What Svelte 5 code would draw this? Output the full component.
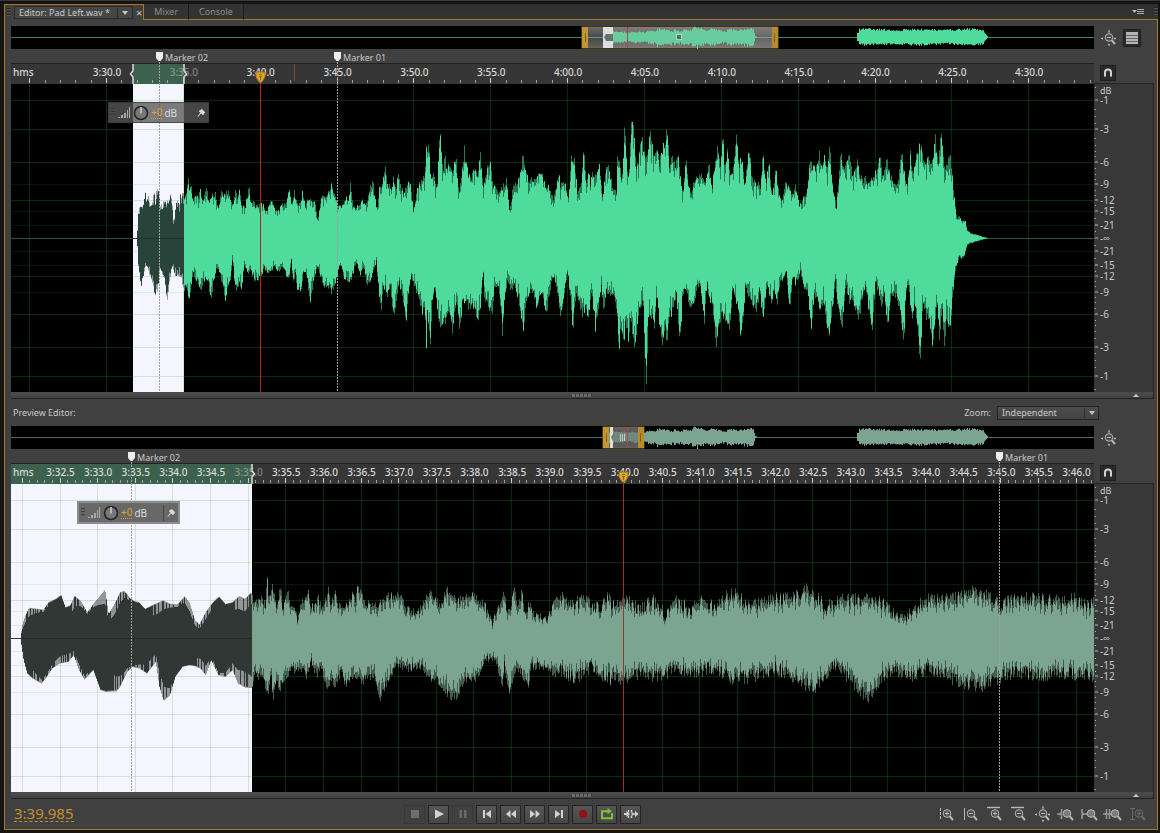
<script>
	// wave shapes, "x,y" knots, traced clip by clip
	const mainUp = [
		[109, '50,443 52,400 55,352 62,355 70,340 75,314 80,340 84,318 90,350 95,345 101,298 105,345 108,310 115,305 120,345 126,352 132,330 137,345 145,335 152,318 156,350 160,400 164,370 170,322 175,350 180,320 185,320 192,318 198,315 203,256 207,310 212,290 218,335 224,310 230,325 240,308 248,335 255,310 260,288 266,345 275,318 285,315 295,360 304,302 310,320 318,310 327,312 338,355 345,292 352,340 357,290 364,355 375,350 386,288 392,345 400,330 405,350 412,345 420,345 430,345 440,370 445,350 455,330 465,360 475,365 482,345 490,350 500,330 506,290 512,345 522,308 530,345 540,345 546,310 555,348 565,330 575,335 585,340 592,396 600,340 608,315 615,318 625,305 635,280 642,318 650,345 660,348 668,350 678,320 684,330 690,290 698,350 706,360 715,345 725,335 735,348 745,318 756,270 762,310 770,360 777,300 785,290 796,240 801,285 806,285 812,315 820,255 826,310 833,242 840,290 850,315 860,290 870,280 879,365 888,310 895,295 905,265 912,260 918,188 925,180 932,270 940,250 950,312 956,150 962,150 967,260 974,200 980,250 986,225 997,240 1007,205 1015,315 1022,270 1032,185 1042,250 1053,270 1062,238 1070,265 1080,204 1088,300 1098,250 1110,225 1120,290 1135,318 1145,295 1158,275 1168,365 1178,295 1190,280 1198,265 1209,190 1216,245 1225,270 1235,265 1245,280 1264,245 1275,300 1285,290 1300,330 1312,265 1318,270'],
		[549, '0,285 15,290 25,335 33,208 42,208 52,315 62,290 70,162 77,290 84,240 90,290 98,248 105,265 118,235 127,335 135,250 141,220 150,265 160,305 168,305 172,185 185,285 194,95 198,215 206,275 214,80 220,98 224,215 232,235 245,132 250,205 262,180 271,128 280,210 290,185 296,220 305,195 312,160 322,135 328,240 336,190 345,240 353,195 360,260 368,320 377,208 384,290 395,310 402,270 415,258 425,260 432,285 440,255 447,232 455,300 465,210 472,180 480,235 487,138 493,230 502,182 510,260 518,240 528,156 535,230 545,215 553,300 566,172 575,270 585,280 600,290 609,185 616,290 626,225 635,320 647,238 656,320 664,330 675,285 690,305 700,315 706,285 718,348 730,325 740,305 748,215 755,240 765,235 777,200 785,245 793,210 800,240 808,180 818,310 828,350 842,192 850,240 858,225 868,205 878,262 892,215 900,270 915,270 925,290 940,260 950,245 960,205 967,280 980,205 990,262 1010,295 1023,190 1030,240 1040,300 1050,200 1058,265 1072,178 1085,175 1090,235 1100,210 1110,228 1118,225 1125,152 1132,225 1143,138 1150,225 1160,235 1168,185 1175,245 1182,330 1190,390 1198,375 1204,397 1214,388 1220,420 1232,430 1245,432 1262,438 1283,443']
	];
	const mainDown = [
		[109, '50,450 55,540 64,580 72,540 80,518 88,550 95,575 102,605 110,602 118,535 125,545 132,560 139,632 146,580 152,540 158,528 165,560 172,545 182,560 190,595 198,580 205,640 212,580 218,550 228,565 240,595 250,568 262,565 272,628 280,570 290,530 298,540 305,580 315,622 322,580 330,570 337,502 342,570 350,600 358,570 363,590 372,525 382,545 392,540 402,565 412,560 422,560 432,525 440,545 452,540 462,525 472,540 485,530 495,545 503,570 509,545 514,500 517,565 525,550 530,595 542,595 550,540 560,560 570,630 580,560 590,530 600,550 612,590 622,580 632,600 642,590 655,528 664,520 672,565 682,565 692,570 702,530 710,515 718,550 730,525 740,580 750,570 760,540 768,508 775,600 782,665 788,590 795,585 802,610 810,585 818,668 828,640 835,570 845,600 857,685 865,600 873,560 882,580 893,610 900,640 908,665 914,630 918,790 921,650 925,710 930,742 935,640 942,580 950,640 957,688 965,700 975,680 985,650 995,720 1002,650 1010,620 1019,722 1025,640 1035,620 1045,650 1055,630 1062,655 1075,685 1085,600 1088,525 1092,620 1104,650 1115,670 1122,580 1133,580 1140,640 1146,715 1153,610 1162,570 1172,600 1180,580 1192,610 1202,660 1210,710 1218,620 1228,600 1238,605 1248,640 1258,620 1268,605 1277,683 1285,610 1300,550 1312,600'],
		[549, '0,670 10,620 22,535 30,620 38,715 45,620 52,610 65,665 75,650 85,665 95,600 105,705 115,640 124,572 130,680 138,600 150,610 160,605 168,640 176,772 182,690 188,770 195,690 204,745 210,690 224,758 235,665 248,615 258,876 264,690 272,665 282,705 290,605 298,700 308,755 315,700 320,745 328,670 340,650 348,600 358,758 366,625 375,590 390,655 402,620 412,580 420,580 432,685 440,570 447,630 455,620 466,755 472,730 480,680 490,670 500,680 508,720 518,580 525,630 532,625 540,750 548,680 556,570 565,620 575,630 588,670 598,590 609,690 615,625 622,575 632,630 642,600 650,635 660,565 670,560 678,540 688,660 697,545 705,575 720,545 732,590 742,590 752,718 762,610 770,620 782,655 790,620 795,675 808,720 818,640 825,565 832,640 846,695 856,580 866,630 878,625 895,685 905,620 915,580 925,650 936,705 945,575 955,600 962,640 972,610 983,698 992,600 1005,610 1020,650 1030,770 1036,600 1044,580 1054,680 1064,625 1079,805 1088,630 1098,670 1108,670 1117,782 1130,610 1138,760 1145,650 1152,748 1160,670 1168,710 1175,640 1182,560 1188,525 1196,500 1204,502 1212,495 1220,465 1230,458 1250,452 1283,443']
	];
	const zoomUp = '57,225 62,190 70,165 80,142 100,145 120,148 135,125 155,115 170,103 182,140 195,135 208,106 225,122 243,155 262,128 280,105 293,88 303,160 320,130 335,95 348,92 362,112 375,122 388,125 405,145 430,132 455,120 475,130 495,132 516,108 530,128 545,180 557,192 575,155 595,125 612,108 630,130 650,125 668,107 685,115 700,98 706,100 712,135 720,115 735,120 742,130 747,45 752,118 762,72 770,120 776,138 785,68 790,140 800,118 805,90 812,135 820,130 832,175 845,125 862,95 870,135 880,140 890,115 900,145 912,122 919,82 925,140 938,90 945,140 960,135 975,125 985,100 992,125 1000,75 1010,98 1025,130 1045,140 1065,130 1085,107 1120,108 1135,145 1160,155 1175,150 1190,120 1206,90 1220,125 1235,130 1250,90 1265,105 1280,120 1300,115 1320,95 1340,125 1355,130 1378,190 1390,150 1400,140 1410,85 1418,165 1430,130 1440,88 1448,150 1462,82 1468,175 1480,125 1490,160 1510,165 1530,170 1545,140 1560,115 1568,110';
	const zoomDown = '57,240 65,300 75,340 90,355 115,370 130,350 145,325 165,310 190,305 205,285 220,330 235,358 260,330 280,390 295,395 325,393 335,380 355,335 370,320 390,325 410,340 435,305 445,380 457,422 475,405 490,350 510,320 530,315 545,318 560,325 575,345 590,300 610,345 630,350 650,330 665,370 685,382 706,383 712,330 720,350 735,345 750,410 758,340 764,430 770,370 785,380 800,350 815,330 840,320 858,345 870,300 885,345 900,320 912,380 925,360 940,375 955,330 965,372 985,345 1005,360 1020,360 1045,340 1062,420 1080,370 1100,330 1120,315 1140,325 1160,320 1180,315 1200,350 1215,355 1230,365 1250,400 1265,412 1280,405 1300,360 1330,362 1350,310 1370,290 1390,310 1405,385 1410,310 1426,395 1440,330 1460,340 1478,385 1485,320 1510,315 1530,320 1550,345 1568,330';
	const zoomUpTail = '566,38 572,35 585,38 600,30 606,42 615,30 625,40 640,28 652,38 665,24 675,38 690,28 700,38 715,32 727,42 735,45 742,38 755,32 770,40 785,40 800,45 806,48 815,43 825,30 840,38 855,38 870,40 885,33 900,18 915,30 930,40 950,38 970,48 985,43 1000,33 1015,40 1030,40 1045,38 1060,36 1075,40 1085,32 1094,36';
	const zoomDownTail = '566,36 575,40 590,30 605,40 620,42 640,36 660,38 680,30 695,36 710,30 730,40 745,40 760,36 775,30 790,38 800,45 815,50 825,36 835,28 850,40 860,55 868,60 880,40 895,33 910,38 930,30 945,38 960,44 980,48 990,43 1000,40 1015,33 1040,38 1060,36 1075,36 1094,38';

	const WIDTH = 1083;
	const parse = (s) => s.split(' ').map((p) => p.split(',').map(Number));

	function noise(i) {
		const v = Math.sin(i * 127.1 + 11.7) * 43758.5453;
		return v - Math.floor(v);
	}

	// one value for each column of the view
	function sample(knots) {
		const out = [];
		let k = 0;
		for (let x = 0; x < WIDTH; x++) {
			while (k < knots.length - 2 && knots[k + 1][0] < x) k++;
			const [x0, y0] = knots[k];
			const [x1, y1] = knots[k + 1];
			if (x < knots[0][0] || x > knots[knots.length - 1][0]) out.push(0);
			else out.push(Math.max(0, y0 + ((y1 - y0) * (x - x0)) / (x1 - x0)));
		}
		return out;
	}

	const joinMain = (parts) => sample(parts.flatMap(([start, s]) => parse(s).map(([x, y]) => [start + x / 3, Math.abs(y - 443) / 3])));
	const joinZoom = (head, tail) => sample([
		...parse(head).map(([x, y]) => [x / 2.8 - 11, Math.abs(y - 233) / 3]),
		...parse(tail).map(([x, y]) => [x - 11, y])
	]);

	function toPath(up, down, mid = 154, start = 0) {
		let d = `M${start} ${mid}`;
		up.forEach((a, i) => (d += `V${(mid - a).toFixed(1)}H${start + i + 1}`));
		d += `V${mid}`;
		for (let i = down.length - 1; i >= 0; i--) d += `V${(mid + down[i]).toFixed(1)}H${start + i}`;
		return d + 'Z';
	}

	const mUp = joinMain(mainUp);
	const mDown = joinMain(mainDown);
	const zUp = joinZoom(zoomUp, zoomUpTail);
	const zDown = joinZoom(zoomDown, zoomDownTail);

	const vary = (list, seed, amount) => list.map((a, i) => a * (1.02 + (noise(i + seed) - 0.5) * amount));
	const roughen = (list, seed, amount) => list.map((a, i) => a * (1 - amount * noise(i + seed) ** 2));
	// right of the selection the samples swing more from column to column
	const jag = (list, seed) => list.map((a, i) => (i < 241 ? a : a + (noise(i + seed) - 0.5) * (i > 548 ? 14 : 9)));
	const mUpFull = vary(mUp, 21, 0.14);
	const mDownFull = vary(mDown, 63, 0.14);
	const zUpFull = jag(zUp, 3);
	const zDownFull = jag(zDown, 77);
	const core = (list, seed) => list.map((a, i) => {
		if (i > 241) return a * (0.98 - 0.28 * noise(i + seed));
		const striped = Math.sin(i / 13 + seed) > -0.6 && noise(i + seed) > 0.35;
		return striped ? a * (0.8 - 0.12 * Math.sin(i / 7)) : a * 0.98;
	});

	const mainWave = {
		peak: toPath(mUpFull, mDownFull),
		body: toPath(roughen(mUpFull, 5, 0.26), roughen(mDownFull, 9, 0.26))
	};
	const zoomWave = {
		peak: toPath(zUpFull, zDownFull),
		body: toPath(core(zUpFull, 1), core(zDownFull, 4))
	};

	// overview: first clip is the main wave squeezed, second one is flatter
	function small(list) {
		return Array.from({ length: 153 }, (_, i) => {
			const at = Math.round(126 + i * 5.45);
			const a = Math.max(...list.slice(at, at + 5));
			return i < 2 || i > 150 ? a * 0.05 : 2 + a * 0.07;
		});
	}
	const second = (seed) => Array.from({ length: 131 }, (_, i) => {
		if (i < 2) return 4;
		if (i > 126) return (131 - i) * 1.1;
		return 6 + noise(i + seed) * 2.4 + Math.sin(i / 8) * 0.5;
	});
	const overviewPath = toPath(small(mUp), small(mDown), 11, 593) + toPath(second(2), second(50), 11, 846);

	function clock(t) {
		const m = Math.floor(t / 60);
		return `${m}:${(t - m * 60).toFixed(1).padStart(4, '0')}`;
	}

	function makeTicks(first, px, step, count, minor) {
		const list = [];
		for (let i = -1; i < count; i++) {
			list.push({ x: first + i * px, label: i < 0 ? '' : clock(210 + step.from + i * step.by), major: true });
			for (let j = 1; j < minor; j++) list.push({ x: first + i * px + (j * px) / minor, label: '', major: false });
		}
		return list.filter((t) => t.x > 0 && t.x < WIDTH);
	}

	// grid lines give way to the playhead and the markers
	function gridTicks(ed) {
		const taken = [ed.head, ...ed.markers.map((m) => m.x)];
		return ed.ticks.filter((t) => t.major && !taken.some((x) => Math.abs(x - t.x) < 3));
	}

	const main = {
		id: 'main',
		ticks: makeTicks(96, 76.85, { from: 0, by: 5 }, 13, 5),
		sel: [122, 173],
		wave: mainWave,
		color: '#4edb9b',
		dark: '#28433a',
		head: 249,
		headColor: '#b82424',
		markers: [{ x: 148, name: 'Marker 02' }, { x: 326, name: 'Marker 01' }],
		hud: 97,
		window: [571, 767],
		white: [592, 602],
		headSmall: 616
	};
	const preview = {
		id: 'preview',
		ticks: makeTicks(49.5, 37.63, { from: 2.5, by: 0.5 }, 28, 5),
		sel: [0, 241],
		wave: zoomWave,
		color: '#7ba591',
		dark: '#303734',
		head: 612,
		headColor: '#963628',
		markers: [{ x: 120, name: 'Marker 02' }, { x: 988, name: 'Marker 01' }],
		hud: 66,
		window: [592, 633],
		white: [599, 602],
		headSmall: 616
	};

	const dbLines = [[138, '1'], [109, '3'], [76, '6'], [54, '9'], [38, '12'], [27, '15'], [13, '21']];
	const dbLabels = [
		...dbLines.map(([o, t]) => ({ y: 154 - o, t: '-' + t })),
		{ y: 154, t: '-∞' },
		...dbLines.map(([o, t]) => ({ y: 154 + o, t: '-' + t }))
	];
	const dbMinor = [151, 129, 122, 115, 100, 93, 87, 82, 70, 64, 59, 48, 43, 33, 20, 7];

	const pct = (x) => (x / WIDTH) * 100 + '%';
	const pctY = (y) => (y / 308) * 100 + '%';

	const transport = [
		{ name: 'Stop', off: true },
		{ name: 'Play' },
		{ name: 'Pause', off: true },
		{ name: 'Previous' },
		{ name: 'Rewind' },
		{ name: 'Fast forward' },
		{ name: 'Next' },
		{ name: 'Record' },
		{ name: 'Loop' },
		{ name: 'Skip selection' }
	];
	const zooms = ['in-amp', 'out-amp', 'in-time', 'out-time', 'full', 'in-point', 'out-point', 'selection', 'track'];
	let zoomMode = 'Independent';
</script>

{#snippet lens(kind)}
	<svg class="lens" width="16" height="16" viewBox="0 0 16 16" fill="none" stroke="#b9b9b9" stroke-width="1">
		{#if kind === 'in-amp' || kind === 'out-amp'}
			<path d="M2.5 2v12" stroke-dasharray={kind === 'in-amp' ? '3 1' : 'none'} />
		{:else if kind === 'in-time' || kind === 'out-time'}
			<path d="M1 1.5h13" stroke-width="1.4" />
		{:else if kind === 'full'}
			<path d="M1 8.500h2M14 8.500h2M9 0v2.400M9 14v2M2.500 7.500v2M15 7.500v2M8 2h2M8 14.500h2" />
		{:else if kind === 'in-point'}
			<path d="M3.500 3v4L2 8l1.500 1v4M-1 8h3" stroke="#999" stroke-width="1.600" />
		{:else if kind === 'out-point'}
			<path d="M0 3v4l1.500 1L0 9v4M1 8h4" stroke="#999" stroke-width="1.600" />
		{:else if kind === 'selection'}
			<path d="M.500 3v4L-1 8l1.500 1v4M3.500 3v4L5 8 3.500 9v4M-3 8h9" stroke="#999" stroke-width="1.400" />
		{:else}
			<path d="M2.5 2v12M0 2.5h5M0 13.5h5" />
		{/if}
		<circle cx="9" cy="7.5" r="3.8" fill={kind.includes('point') || kind === 'selection' ? '#7c7c7c' : '#4a4a4a'} />
		<path d="M11.8 10.4L15 14" stroke-width="2" />
		{#if kind.startsWith('in-') && kind !== 'in-point' || kind === 'track'}
			<path d="M7 7.5h4M9 5.5v4" />
		{:else if kind !== 'selection' && !kind.includes('point')}
			<path d="M7 7.5h4" />
		{/if}
	</svg>
{/snippet}

{#snippet transportIcon(name)}
	<svg width="16" height="14" viewBox="0 0 16 14" fill="#d2d2d2">
		{#if name === 'Stop'}
			<path d="M4 3h8v8H4z" fill="#6e6e6e" />
		{:else if name === 'Play'}
			<path d="M4 2.5L13 7l-9 4.500z" />
		{:else if name === 'Pause'}
			<path d="M4.500 3h2.500v8H4.500zM9 3h2.500v8H9z" fill="#696969" />
		{:else if name === 'Previous'}
			<path d="M4 3h2v8H4zM12 3v8L6.500 7z" />
		{:else if name === 'Rewind'}
			<path d="M7.500 3v8L3 7zM13 3v8L8 7z" />
		{:else if name === 'Fast forward'}
			<path d="M3 3v8l5-4zM8.500 3v8L13 7z" />
		{:else if name === 'Next'}
			<path d="M4 3v8l5.500-4zM10 3h2v8h-2z" />
		{:else if name === 'Record'}
			<circle cx="8" cy="7" r="4" fill="#8e1218" />
		{:else if name === 'Loop'}
			<path d="M6 4.200H3v7h10v-5M5 4.200h5" fill="none" stroke="#84bd3f" stroke-width="2" />
			<path d="M8.500 1l4.500 3.200-4.500 3z" fill="#84bd3f" />
		{:else}
			<path d="M5.500 3v2.500M5.500 8.500V11M8.500 3v2.500M8.500 8.500V11" stroke="#d2d2d2" stroke-width="1.400" />
			<path d="M1 6h2.500V4L7 7l-3.500 3V8H1zM8 7l2-2v1.200h2V4l3.500 3L12 10V7.800h-2V9z" />
		{/if}
	</svg>
{/snippet}

{#snippet overview(ed)}
	<div class="overview">
		<svg viewBox="0 0 1083 23" preserveAspectRatio="none">
			<defs>
				<linearGradient id="range-{ed.id}" x1="0" y1="0" x2="0" y2="1">
					<stop offset="0" stop-color="#6b6b6b" />
					<stop offset=".5" stop-color="#474747" />
					<stop offset="1" stop-color="#626262" />
				</linearGradient>
			</defs>
			<path d="M0 11.500H1083" stroke={ed.id === 'main' ? '#35875f' : '#526d61'} />
			<rect x={ed.window[0]} y="1" width={ed.window[1] - ed.window[0]} height="21" fill="url(#range-{ed.id})" stroke="#8a6823" />
			{#if ed.id === 'main'}
				<path d="M577 11.500H761" stroke="#5d9c80" />
			{/if}
			<path d={overviewPath} fill={ed.color} />
			{#if ed.id === 'main'}
				<rect x="602" y="1" width="159" height="21" fill="#aaa" opacity=".3" />
				<rect x="665.500" y="8.500" width="5" height="5" fill="#52705f" stroke="#a8d8c2" />
			{:else}
				<rect x="602" y="1" width="26" height="21" fill="#555" opacity=".35" />
				<path d="M609.500 8v7M611.500 8v7M613.500 8v7" stroke="#bcc" />
			{/if}
			<rect x={ed.white[0]} y="1" width={ed.white[1] - ed.white[0]} height="21" fill="#dedee2" />
			<path d="M{ed.white[0] + 1} 11l2-3h{ed.white[1] - ed.white[0] - 3}v7h-{ed.white[1] - ed.white[0] - 3}z" fill="#66736d" />
			<path d="M{ed.headSmall + .5} 1v21" stroke="#a34a44" />
			<rect x={ed.window[0]} y="1" width="6" height="21" fill="#c39535" />
			<rect x={ed.window[1] - 6} y="1" width="6" height="21" fill="#b78a2c" />
			<path d="M{ed.window[0] + 3.500} 7v9M{ed.window[1] - 3.500} 7v9" stroke="#80601d" />
		</svg>
	</div>
{/snippet}

{#snippet timeline(ed)}
	<div class="timeline">
		<div class="marker-row"></div>
		<div class="ruler">
			<div class="ruler-sel" style:left={pct(ed.sel[0])} style:width={pct(ed.sel[1] - ed.sel[0])}></div>
			<span class="unit">hms</span>
			{#each ed.ticks as tick}
				<i class:major={tick.major} style:left={pct(tick.x)}></i>
				{#if tick.label}
					<span class="time" class:dim={tick.label === '3:35.0'} style:left={pct(tick.x)}>{tick.label}</span>
				{/if}
			{/each}
			{#if ed.id === 'main'}
				<b class="ghost" style:left={pct(283)}></b>
				<svg class="brace left" style:left={pct(ed.sel[0])} width="5" height="20" viewBox="0 0 5 20"><path d="M4 0v7L1.500 10 4 13v7" fill="none" stroke="#ddd" stroke-width="1.500" /></svg>
			{/if}
			<svg class="brace" style:left={pct(ed.sel[1])} width="5" height="20" viewBox="0 0 5 20"><path d="M1 0v7l2.500 3L1 13v7" fill="none" stroke="#ddd" stroke-width="1.500" /></svg>
		</div>
		<div class="wave">
			<svg viewBox="0 0 1083 308" preserveAspectRatio="none">
				<defs>
					<clipPath id="in-{ed.id}"><rect x={ed.sel[0]} y="0" width={ed.sel[1] - ed.sel[0]} height="308" /></clipPath>
					<clipPath id="out-{ed.id}"><rect x={ed.sel[1]} y="0" width={WIDTH - ed.sel[1]} height="308" /></clipPath>
				</defs>
				<rect x={ed.sel[0]} y="0" width={ed.sel[1] - ed.sel[0]} height="308" fill="#f5f5ff" />
				<g class="grid">
					{#each gridTicks(ed) as tick}
						<path d="M{Math.round(tick.x) - .5} 0V308" />
					{/each}
					{#each dbLines as [o]}
						<path d="M0 {154.500 - o}H1083M0 {154.500 + o}H1083" opacity={o < 60 && o !== 38 ? 0.6 : 1} />
					{/each}
				</g>
				<rect x={ed.sel[0]} y="0" width={ed.sel[1] - ed.sel[0]} height="308" fill="#f5f5ff" opacity=".4" />
				<path d="M0 154.500H1083" stroke={ed.id === 'main' ? '#2b5542' : '#5d4a4a'} />
				<g clip-path="url(#in-{ed.id})" fill={ed.dark}>
					<path d={ed.wave.peak} opacity=".5" />
					<path d={ed.wave.body} />
				</g>
				<g clip-path="url(#out-{ed.id})" fill={ed.color}>
					<path d={ed.wave.peak} opacity=".55" />
					<path d={ed.wave.body} />
				</g>
				<path d="M{ed.sel[0]} 154.500H{ed.sel[1]}" stroke="#1d2522" opacity=".6" />
			</svg>
			<div class="hud {ed.id}" style:left={pct(ed.hud)}>
				<span class="grip"></span>
				<svg width="14" height="12" viewBox="0 0 14 12" fill="#aaa"><path d="M1 10h2v1H1zM4 8h2v3H4zM7 6h2v5H7zM10 3h1v8h-1zM12 0h1v11h-1z" /></svg>
				<svg width="16" height="16" viewBox="0 0 16 16">
					<circle cx="8" cy="8" r="6.500" fill="#777" stroke="#242424" stroke-width="1.600" />
					<path d="M8 2v6.500" stroke="#ddd" stroke-width="1.300" />
				</svg>
				<button class="gain">+0</button>
				<span class="db">dB</span>
				<button class="pin" aria-label="Pin">
					<svg width="9" height="9" viewBox="0 0 9 9"><path d="M4.500 1L8 4.500 7 5 6 7 4 5 1 8.500 3.600 4.600 2 3l2-.800z" fill="#ddd" stroke="#ddd" stroke-width=".600" /></svg>
				</button>
			</div>
		</div>
		{#each ed.markers as marker}
			<div class="marker" style:left={pct(marker.x)}>
				<svg width="9" height="10" viewBox="0 0 9 10"><path d="M1 0h7v6L5.500 9h-2L1 6z" fill="#eee" /></svg>
				<span>{marker.name}</span>
			</div>
		{/each}
		<div class="playhead" style:left={pct(ed.head)} style:--line={ed.headColor}>
			<svg width="11" height="12" viewBox="0 0 11 12">
				<path d="M1 1h9v5L7 11H4L1 6z" fill="#e0a524" stroke="#9c701a" />
				<path d="M4 3.500h3M4 5.500h3M5.500 5v4" stroke="#8c6212" />
			</svg>
		</div>
	</div>
{/snippet}

{#snippet rail()}
	<div class="rail">
		<button class="snap" aria-label="Toggle snapping">
			<svg width="10" height="10" viewBox="0 0 10 10" fill="none" stroke-width="2"><path d="M2 9V4.500a3 3 0 0 1 6 0V9" stroke="#d4d4d4" /><path d="M1 8.500h2M7 8.500h2" stroke="#8a8a8a" stroke-width="1" /></svg>
		</button>
		<div class="scale">
			<span class="head">dB</span>
			{#each dbLabels as label}
				<span class="mark" style:top={pctY(label.y)}>{label.t}</span>
			{/each}
			{#each dbMinor as o}
				<i style:top={pctY(154 - o)}></i>
				<i style:top={pctY(154 + o)}></i>
			{/each}
		</div>
	</div>
{/snippet}

{#snippet scrollbar()}
	<div class="scrollbar">
		<span class="ridge"></span>
		<span class="up"></span>
	</div>
{/snippet}

<div class="app">
	<div class="tabs">
		<div class="tab active">
			<span class="grip"></span>
			<button class="file">Editor: Pad Left.wav * <span class="split"></span><span class="down"></span></button>
			<button class="close" aria-label="Close">×</button>
		</div>
		<button class="tab">Mixer</button>
		<button class="tab">Console</button>
		<div class="rest">
			<button class="menu" aria-label="Panel menu">
				<svg width="13" height="8" viewBox="0 0 13 8"><path d="M0 2h5L2.500 5z" fill="#bbb" /><path d="M5 1.500h7M5 3.500h7M5 5.500h7" stroke="#aaa" /></svg>
			</button>
			<span class="grip"></span>
		</div>
	</div>

	<div class="panel">
		<div class="row top">
			{@render overview(main)}
			<div class="tools">
				<button class="icon" aria-label="Zoom out full">{@render lens('full')}</button>
				<button class="list" aria-label="Show layers">
					<svg width="12" height="12" viewBox="0 0 12 12"><path d="M0 0h12v12H0z" fill="#b5b5b5" /><path d="M0 3.500h12M0 6.500h12M0 9.500h12" stroke="#666" /></svg>
				</button>
			</div>
		</div>
		<div class="row grow">
			{@render timeline(main)}
			{@render rail()}
		</div>
		{@render scrollbar()}

		<div class="caption">
			<span>Preview Editor:</span>
			<label for="zoom">Zoom:</label>
			<div class="pick">
				<select id="zoom" bind:value={zoomMode}>
					<option>Independent</option>
					<option>Linked</option>
				</select>
				<span class="down"></span>
			</div>
		</div>

		<div class="row">
			{@render overview(preview)}
			<div class="tools">
				<button class="icon" aria-label="Zoom out full">{@render lens('full')}</button>
			</div>
		</div>
		<div class="row grow">
			{@render timeline(preview)}
			{@render rail()}
		</div>
		{@render scrollbar()}

		<div class="footer">
			<div><button class="now">3:39.985</button></div>
			<div class="transport">
				{#each transport as item}
					<button aria-label={item.name} disabled={item.off}>{@render transportIcon(item.name)}</button>
				{/each}
			</div>
			<div class="zooms">
				{#each zooms as kind}
					<button class="icon" aria-label="Zoom {kind}" disabled={kind === 'track'}>{@render lens(kind)}</button>
				{/each}
			</div>
		</div>
	</div>
</div>

<style>
	:global(body) {
		margin: 0;
		background: #161412;
	}

	.app {
		min-height: 100vh;
		box-sizing: border-box;
		padding: 3px 2px 3px 4px;
		display: flex;
		flex-direction: column;
		background: #161412;
		border-top: 1px solid #383838;
		color: #cacaca;
		font: 9px/12px "Noto Sans", "Open Sans", sans-serif;
	}

	button {
		font: inherit;
		color: inherit;
		background: none;
		border: 0;
		padding: 0;
		margin: 0;
		display: flex;
		align-items: center;
		justify-content: center;
	}

	svg {
		display: block;
		flex: none;
	}

	/* tabs */
	.tabs {
		display: flex;
		height: 16px;
		background: #303030;
	}

	.tab {
		border-right: 1px solid #1d1d1d;
		border-bottom: 1px solid #a27a2b;
		padding: 0 10px;
		color: #8b8b8b;
		background: #333;
	}

	.tab.active {
		display: flex;
		align-items: center;
		gap: 3px;
		padding: 0 1px 0 2px;
		background: #404040;
		border: 1px solid #a27a2b;
		border-bottom: 0;
		color: #cacaca;
	}

	.grip {
		width: 4px;
		height: 9px;
		background: repeating-linear-gradient(#262626 0 1px, #555 1px 2px, transparent 2px 3px);
	}

	.file {
		height: 13px;
		padding: 0 4px;
		border: 1px solid #2a2a2a;
		background: #464646;
	}

	.split {
		width: 1px;
		height: 10px;
		margin: 0 4px 0 7px;
		background: #2b2b2b;
	}

	.down {
		border: 3px solid transparent;
		border-top: 4px solid #c6c6c6;
		border-bottom: 0;
	}

	.close {
		font-size: 11px;
	}

	.rest {
		flex: 1;
		display: flex;
		justify-content: flex-end;
		align-items: center;
		gap: 9px;
		border-bottom: 1px solid #a27a2b;
		background: linear-gradient(#2e2e2e, #353535);
	}

	/* panel */
	.panel {
		flex: 1;
		display: flex;
		flex-direction: column;
		background: #404040;
		border: 1px solid #a27a2b;
		border-top: 0;
		padding: 6px 3px 0 6px;
	}

	.row {
		display: grid;
		grid-template-columns: 1fr 60px;
	}

	.grow {
		flex: 1;
		min-height: 200px;
	}

	.overview {
		background: #000;
		height: 23px;
	}

	.overview svg {
		width: 100%;
		height: 100%;
	}

	.tools {
		display: flex;
		align-items: center;
		gap: 7px;
		padding-left: 6px;
	}

	.list {
		width: 18px;
		height: 18px;
		border: 1px solid #1f1f1f;
		background: #2b2b2b;
		box-sizing: border-box;
	}

	/* timeline */
	.timeline {
		position: relative;
		display: flex;
		flex-direction: column;
	}

	.marker-row {
		height: 14px;
	}

	.ruler {
		position: relative;
		height: 21px;
		box-sizing: border-box;
		background: #363636;
		border-top: 1px solid #222;
		font-size: 10px;
		font-weight: 500;
		color: #dadada;
		overflow: hidden;
	}

	.ruler-sel {
		position: absolute;
		top: 0;
		bottom: 0;
		background: #3c614e;
	}

	.unit {
		position: absolute;
		left: 2px;
		top: 2px;
	}

	.time {
		position: absolute;
		top: 2px;
		transform: translateX(-50%);
	}

	.time.dim {
		opacity: .45;
	}

	.ruler i {
		position: absolute;
		bottom: 1px;
		width: 1px;
		height: 3px;
		margin-left: -1px;
		background: #a2a2a2;
	}

	.ruler i.major {
		height: 5px;
		background: #ccc;
	}

	.ghost {
		position: absolute;
		top: 0;
		bottom: 3px;
		width: 1px;
		background: #6d5229;
	}

	.brace {
		position: absolute;
		top: 0;
		margin-left: -1px;
	}

	.brace.left {
		margin-left: -4px;
	}

	.wave {
		position: relative;
		flex: 1;
		background: #000;
	}

	.wave > svg {
		position: absolute;
		width: 100%;
		height: 100%;
	}

	.grid path {
		stroke: rgba(20, 150, 30, .3);
	}

	.marker {
		position: absolute;
		top: 3px;
		bottom: 0;
		display: flex;
		align-items: flex-start;
		gap: 1px;
		margin-left: -4px;
	}

	.marker span {
		white-space: nowrap;
	}

	.marker::after {
		content: "";
		position: absolute;
		left: 4px;
		top: 10px;
		bottom: 0;
		width: 1px;
		background: repeating-linear-gradient(#a0a0a0 0 2px, transparent 2px 3px);
	}

	.playhead {
		position: absolute;
		top: 22px;
		bottom: 0;
		width: 11px;
		margin-left: -5px;
	}

	.playhead::after {
		content: "";
		position: absolute;
		left: 5px;
		top: 12px;
		bottom: 0;
		width: 1px;
		background: var(--line);
	}

	/* floating gain control */
	.hud {
		position: absolute;
		z-index: 1;
		top: 18px;
		height: 21px;
		box-sizing: border-box;
		display: flex;
		align-items: center;
		gap: 2px;
		padding: 0 2px;
		background: rgba(88, 88, 88, .78);
		border: 1px solid rgba(60, 60, 60, .8);
		font-size: 10px;
	}

	.hud.preview {
		top: 17px;
		height: 23px;
		background: #686868;
		border: 2px solid #8d8d8d;
	}

	.hud .grip {
		opacity: .6;
	}

	.gain {
		color: #e0a22f;
		line-height: 11px;
		border-bottom: 1px dotted #d09a35;
	}

	.db {
		color: #ddd;
	}

	.pin {
		margin-left: 14px;
		padding-left: 3px;
		height: 16px;
		border-left: 1px solid #444;
	}

	/* amplitude scale */
	.rail {
		display: flex;
		flex-direction: column;
		align-items: flex-start;
	}

	.snap {
		width: 16px;
		height: 16px;
		box-sizing: border-box;
		margin: 16px 0 2px 6px;
		border: 1px solid #1e1e1e;
		background: #2a2a2a;
	}

	.scale {
		position: relative;
		flex: 1;
		align-self: stretch;
		background: #383838;
		border-top: 1px solid #242424;
		border-right: 1px solid #242424;
		line-height: 9px;
	}

	.scale .head {
		position: absolute;
		left: 6px;
		top: 2px;
	}

	.mark {
		position: absolute;
		left: 6px;
		transform: translateY(-50%);
		font-size: 10px;
	}

	.mark::before {
		content: "";
		position: absolute;
		left: -5px;
		top: 4px;
		width: 3px;
		height: 1px;
		background: #bbb;
	}

	.scale i {
		position: absolute;
		left: 1px;
		width: 1px;
		height: 1px;
		background: #bbb;
	}

	.scrollbar {
		height: 7px;
		box-sizing: border-box;
		display: grid;
		grid-template-columns: 1fr auto 1fr;
		align-items: center;
		background: linear-gradient(#4f4f4f, #404040);
		border-bottom: 1px solid #242424;
		border-right: 1px solid #242424;
	}

	.ridge {
		grid-column: 2;
		width: 20px;
		height: 3px;
		background: repeating-linear-gradient(90deg, #6c6c6c 0 3px, #3a3a3a 3px 4px);
	}

	.up {
		justify-self: end;
		margin-right: 14px;
		border: 3px solid transparent;
		border-bottom: 3px solid #ccc;
		border-top: 0;
	}

	.caption {
		display: flex;
		align-items: center;
		height: 27px;
		padding: 0 55px 0 2px;
	}

	.caption span:first-child {
		flex: 1;
	}

	.pick {
		position: relative;
		margin-left: 6px;
	}

	.pick select {
		display: block;
		appearance: none;
		width: 102px;
		height: 14px;
		padding: 0 4px;
		border: 1px solid #252525;
		border-radius: 0;
		background: linear-gradient(#4d4d4d, #434343);
		color: #cacaca;
		font: inherit;
	}

	.pick .down {
		position: absolute;
		right: 4px;
		top: 5px;
		pointer-events: none;
	}

	.pick::after {
		content: "";
		position: absolute;
		right: 14px;
		top: 2px;
		bottom: 2px;
		width: 1px;
		background: #2e2e2e;
	}

	/* footer */
	.footer {
		display: grid;
		grid-template-columns: 393fr auto 512fr;
		align-items: center;
		height: 30px;
	}

	.now {
		margin-left: 3px;
		font-size: 15px;
		line-height: 15px;
		color: #c3912f;
		border-bottom: 1px dashed #c3912f;
	}

	.transport {
		display: flex;
		gap: 3px;
	}

	.transport button {
		width: 21px;
		height: 19px;
		border: 1px solid #232323;
		box-sizing: border-box;
		background: linear-gradient(#565656, #464646);
	}

	.transport button:disabled {
		border-color: #383838;
		background: #404040;
	}

	.zooms {
		display: flex;
		justify-content: flex-end;
		padding-right: 4px;
	}

	.zooms .icon {
		width: 24px;
		height: 20px;
	}

	.icon:disabled {
		opacity: .35;
	}

	.lens {
		overflow: visible;
	}
</style>
